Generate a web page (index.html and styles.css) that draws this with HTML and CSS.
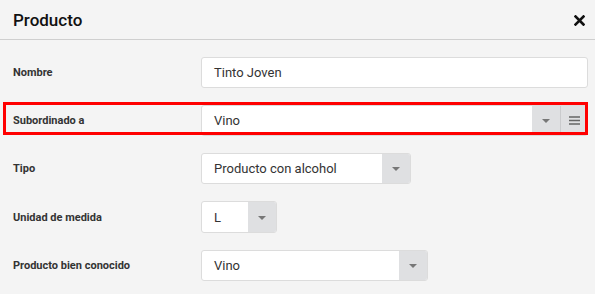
FILE: index.html
```html
<html>
<head>
    <meta charset="utf-8">
    <link rel="stylesheet" href="styles.css">
</head>
<body>
    <div class="dialog">
        <div class="dialogHeader">
            <h3 class="dialogTitle">Producto</h3>
            <span class="closeButton">
                <svg width="11" height="11" viewBox="0 0 11 11"><path d="M1.5 1.5 L9.5 9.5 M9.5 1.5 L1.5 9.5" stroke="#111" stroke-width="2.6" stroke-linecap="square"/></svg>
            </span>
        </div>

        <div class="form">
            <div class="row">
                <label class="label">Nombre</label>
                <div class="field wide">
                    <span class="value">Tinto Joven</span>
                </div>
            </div>

            <div class="row highlighted">
                <label class="label">Subordinado a</label>
                <div class="field wide">
                    <span class="value">Vino</span>
                    <span class="button caret"></span>
                    <span class="button menu">
                        <svg width="11" height="9" viewBox="0 0 11 9"><path d="M0 1 H11 M0 4.5 H11 M0 8 H11" stroke="#666" stroke-width="1.3"/></svg>
                    </span>
                </div>
            </div>

            <div class="row">
                <label class="label">Tipo</label>
                <div class="field tipo">
                    <span class="value">Producto con alcohol</span>
                    <span class="button caret"></span>
                </div>
            </div>

            <div class="row">
                <label class="label">Unidad de medida</label>
                <div class="field unidad">
                    <span class="value">L</span>
                    <span class="button caret"></span>
                </div>
            </div>

            <div class="row">
                <label class="label">Producto bien conocido</label>
                <div class="field conocido">
                    <span class="value">Vino</span>
                    <span class="button caret"></span>
                </div>
            </div>
        </div>
    </div>
</body>
</html>
```

FILE: styles.css
```css
body {
    margin: 0px;
    background-color: #f4f4f4;
    color: #333333;
    font-family: Roboto, "Liberation Sans", Arial, sans-serif;
}
.dialogHeader {
    display: flex;
    align-items: center;
    justify-content: space-between;
    height: 39px;
    padding: 0px 10px 0px 13px;
    border-bottom: 1px solid #cfcfcf;
}
.dialogTitle {
    margin: 0px;
    font-size: 17px;
    font-weight: 500;
    color: #111111;
}
.closeButton {
    display: flex;
    margin-top: 1px;
}
.form {
    display: flex;
    flex-direction: column;
    gap: 17px;
    padding-top: 17px;
}
.row {
    position: relative;
    display: flex;
    align-items: center;
}
.label {
    width: 188px;
    padding-left: 13px;
    font-size: 11px;
    font-weight: bold;
    color: #333333;
}
.field {
    display: flex;
    align-items: stretch;
    box-sizing: border-box;
    height: 31px;
    background-color: #ffffff;
    border: 1px solid #dcdcdc;
    border-radius: 3px;
    overflow: hidden;
    font-size: 13px;
}
.value {
    flex: 1;
    display: flex;
    align-items: center;
    padding-left: 12px;
}
.wide {
    width: 387px;
}
.tipo {
    width: 210px;
}
.unidad {
    width: 76px;
    height: 32px;
}
.conocido {
    width: 227px;
}
.button {
    display: flex;
    align-items: center;
    justify-content: center;
    width: 28px;
    background-color: #dfe0e2;
}
.caret::before {
    content: "";
    border-left: 4px solid transparent;
    border-right: 4px solid transparent;
    border-top: 4px solid #777777;
    margin-top: 1px;
}
.menu {
    width: 26px;
    border-left: 1px solid #cacbcd;
}
.highlighted::after {
    content: "";
    position: absolute;
    top: -3px;
    left: 3px;
    right: 7px;
    height: 33px;
    box-sizing: border-box;
    border: 3px solid #ff0000;
}
```
